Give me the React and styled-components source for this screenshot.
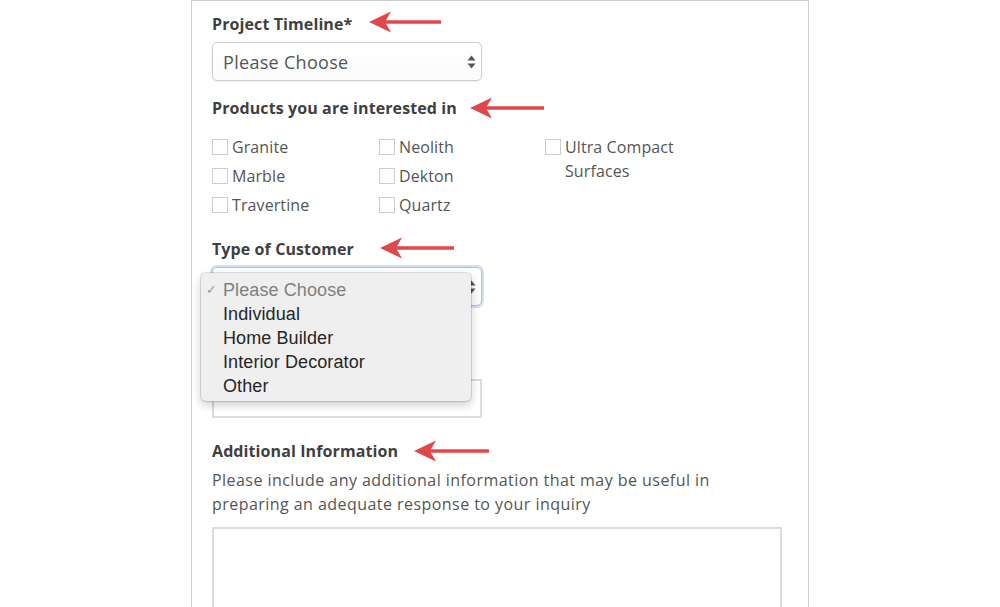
import React from "react";
import styled, { createGlobalStyle } from "styled-components";

const Global = createGlobalStyle`
  html, body { margin: 0; padding: 0; background: #fff; }
  body { font-family: "Open Sans", "Liberation Sans", sans-serif; }
  * { box-sizing: border-box; }
`;

const Page = styled.div`
  width: 1000px;
  height: 607px;
  overflow: hidden;
  padding-left: 191px;
`;

const Card = styled.div`
  width: 618px;
  min-height: 640px;
  border: 1px solid #cfcfcf;
  border-bottom: none;
  padding: 12px 26px 0 20px;
  display: flex;
  flex-direction: column;
`;

const LabelRow = styled.div`
  display: flex;
  align-items: center;
  height: 22px;
  margin-top: ${(p) => p.$top || 0}px;
`;

const Label = styled.span`
  font-size: 16px;
  font-weight: 700;
  color: #3f3f3f;
  letter-spacing: 0.1px;
`;

const ArrowSvg = styled.svg`
  margin-left: ${(p) => p.$gap}px;
  flex: none;
  position: relative;
  top: ${(p) => p.$dy || 0}px;
`;

const Arrow = ({ gap, dy, len = 74 }) => (
  <ArrowSvg $gap={gap} $dy={dy} width={len} height="24" viewBox={`0 0 ${len} 24`}>
    <path d={`M14 12 H${len}`} stroke="#e0474a" strokeWidth="3.5" />
    <path d="M0 12 L22 1.5 L16 12 L22 22.5 Z" fill="#e0474a" />
  </ArrowSvg>
);

const SelectWrap = styled.div`
  position: relative;
  width: 270px;
  margin-top: 7px;
`;

const SelectBox = styled.div`
  height: 39px;
  border: 1px solid ${(p) => (p.$focused ? "#9cc3ec" : "#cdcdcd")};
  border-radius: 5px;
  background: linear-gradient(#ffffff, #fbfbfb);
  box-shadow: ${(p) =>
    p.$focused
      ? "0 0 0 2px rgba(120,170,230,0.35)"
      : "0 1px 2px rgba(0,0,0,0.08)"};
  display: flex;
  align-items: center;
  justify-content: space-between;
  padding: 0 5px 0 10px;
  font-size: 18px;
  letter-spacing: 0.3px;
  color: #555;
`;

const Updown = () => (
  <svg width="9" height="14" viewBox="0 0 9 14">
    <path d="M4.5 0.5 L8.5 5.5 H0.5 Z" fill="#555" />
    <path d="M4.5 13.5 L8.5 8.5 H0.5 Z" fill="#555" />
  </svg>
);

const Menu = styled.div`
  position: absolute;
  left: -11px;
  top: 6px;
  width: 270px;
  height: 128px;
  background: #efefef;
  border-radius: 5px;
  box-shadow: 0 0 0 1px rgba(0, 0, 0, 0.12), 0 4px 10px rgba(0, 0, 0, 0.2);
  padding: 5px 0 0 22px;
  font-family: "Liberation Sans", Arial, sans-serif;
  font-size: 18px;
  letter-spacing: 0.1px;
  z-index: 5;
`;

const Option = styled.div`
  position: relative;
  height: 24px;
  line-height: 24px;
  color: ${(p) => (p.$muted ? "#808080" : "#262626")};
`;

const Check = styled.span`
  position: absolute;
  left: -17px;
  top: 0;
  font-size: 13px;
  color: #9a9a9a;
`;

const Checks = styled.div`
  display: grid;
  grid-template-columns: 167px 166px 150px;
  grid-template-rows: repeat(3, 24px);
  row-gap: 5px;
  margin-top: 16px;
`;

const CheckItem = styled.label`
  display: flex;
  align-items: flex-start;
  font-size: 16px;
  line-height: 24px;
  letter-spacing: 0.1px;
  color: #555;
  grid-column: ${(p) => p.$col};
  grid-row: ${(p) => p.$row};
`;

const Box = styled.span`
  flex: none;
  width: 16px;
  height: 16px;
  border: 1px solid #cccccc;
  background: #fff;
  margin: 4px 4px 0 0;
`;

const Input = styled.div`
  width: 270px;
  height: 39px;
  border: 2px solid #dcdcdc;
  margin-top: 73px;
`;

const Help = styled.p`
  margin: 6px 0 0;
  font-size: 16px;
  line-height: 24px;
  letter-spacing: 0.45px;
  color: #555;
`;

const TextArea = styled.div`
  width: 570px;
  height: 120px;
  border: 2px solid #dcdcdc;
  margin-top: 11px;
`;

const CheckField = ({ col, row, children }) => (
  <CheckItem $col={col} $row={row}>
    <Box />
    <span>{children}</span>
  </CheckItem>
);

export default function App() {
  return (
    <Page>
      <Global />
      <Card>
        <LabelRow>
          <Label>Project Timeline*</Label>
          <Arrow gap={17} dy={-2} len={72} />
        </LabelRow>
        <SelectWrap>
          <SelectBox>
            <span>Please Choose</span>
            <Updown />
          </SelectBox>
        </SelectWrap>

        <LabelRow $top={16}>
          <Label>Products you are interested in</Label>
          <Arrow gap={13} len={74} />
        </LabelRow>
        <Checks>
          <CheckField col={1} row={1}>Granite</CheckField>
          <CheckField col={1} row={2}>Marble</CheckField>
          <CheckField col={1} row={3}>Travertine</CheckField>
          <CheckField col={2} row={1}>Neolith</CheckField>
          <CheckField col={2} row={2}>Dekton</CheckField>
          <CheckField col={2} row={3}>Quartz</CheckField>
          <CheckField col={3} row={"1 / span 2"}>Ultra Compact Surfaces</CheckField>
        </Checks>

        <LabelRow $top={21}>
          <Label>Type of Customer</Label>
          <Arrow gap={26} dy={-1} len={74} />
        </LabelRow>
        <SelectWrap>
          <SelectBox $focused>
            <span />
            <Updown />
          </SelectBox>
          <Menu>
            <Option $muted>
              <Check>✓</Check>Please Choose
            </Option>
            <Option>Individual</Option>
            <Option>Home Builder</Option>
            <Option>Interior Decorator</Option>
            <Option>Other</Option>
          </Menu>
        </SelectWrap>
        <Input />

        <LabelRow $top={22}>
          <Label>Additional Information</Label>
          <Arrow gap={16} len={75} />
        </LabelRow>
        <Help>
          Please include any additional information that may be useful in
          <br />
          preparing an adequate response to your inquiry
        </Help>
        <TextArea />
      </Card>
    </Page>
  );
}
